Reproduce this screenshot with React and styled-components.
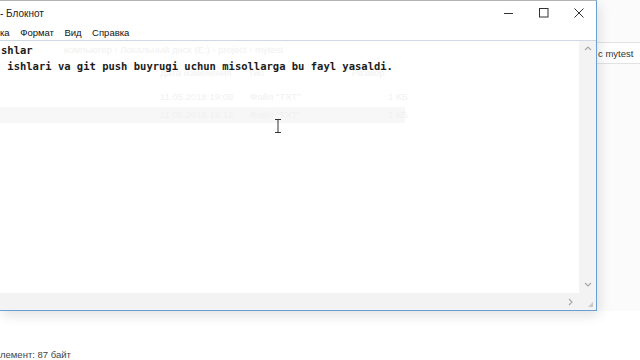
import React from "react";
import styled, { createGlobalStyle } from "styled-components";

const GlobalStyle = createGlobalStyle`
    html, body {
        margin: 0;
        padding: 0;
        background: #ffffff;
    }
    #root {
        width: 640px;
        height: 360px;
        overflow: hidden;
    }
`;

const Desktop = styled.div`
    width: 640px;
    height: 360px;
    display: flex;
    flex-direction: column;
    background: #ffffff;
    font-family: "Liberation Sans", Arial, sans-serif;
`;

const TopRow = styled.div`
    display: flex;
    height: 311px;
`;

const Window = styled.div`
    width: 596px;
    display: flex;
    flex-direction: column;
    border-top: 1px solid #b4b4b4;
    border-right: 1px solid #6a9fd6;
    border-bottom: 1px solid #6a9fd6;
    box-shadow: 2px 4px 12px rgba(0, 0, 0, 0.12);
    background: #ffffff;
    position: relative;
    z-index: 1;
`;

const TitleBar = styled.div`
    height: 23px;
    display: flex;
    align-items: center;
    justify-content: space-between;
`;

const Title = styled.div`
    font-size: 10px;
    color: #222;
    padding: 2px 0 0 0;
`;

const Controls = styled.div`
    display: flex;
    height: 100%;
`;

const ControlButton = styled.div`
    width: 35px;
    height: 100%;
    display: flex;
    align-items: center;
    justify-content: center;
`;

const MenuBar = styled.div`
    height: 16px;
    display: flex;
    align-items: center;
    gap: 10.5px;
    border-bottom: 1px solid #cfd9e6;
    font-size: 9.5px;
    color: #111;
`;

const MenuItem = styled.span`
    display: block;
`;

const Body = styled.div`
    flex: 1;
    display: flex;
`;

const EditArea = styled.div`
    flex: 1;
    position: relative;
    overflow: hidden;
`;

const Ghost = styled.div`
    position: absolute;
    inset: 0;
    font-size: 9.5px;
    color: #f1f1f1;
    pointer-events: none;
`;

const GhostText = styled.div`
    position: absolute;
    left: ${(p) => p.$x}px;
    top: ${(p) => p.$y}px;
    white-space: nowrap;
`;

const GhostRow = styled.div`
    position: absolute;
    left: 0;
    top: 66px;
    width: 405px;
    height: 16px;
    background: #f7f7f7;
`;

const TextContent = styled.pre`
    position: relative;
    display: inline-block;
    margin: 0;
    padding: 1px 0 0 1px;
    font-family: "DejaVu Sans Mono", "Liberation Mono", monospace;
    font-size: 10.5px;
    font-weight: 600;
    line-height: 16px;
    color: #1c1c1c;
`;

const Caret = styled.svg`
    position: absolute;
    left: 274px;
    top: 78px;
`;

const VScroll = styled.div`
    width: 17px;
    background: #f3f3f3;
    display: flex;
    flex-direction: column;
    justify-content: space-between;
    align-items: center;
    padding: 4px 0;
`;

const HScrollRow = styled.div`
    height: 17px;
    display: flex;
    background: #f3f3f3;
`;

const HTrack = styled.div`
    flex: 1;
    display: flex;
    align-items: center;
    justify-content: flex-end;
    padding-right: 4px;
`;

const Corner = styled.div`
    width: 17px;
    display: flex;
    align-items: flex-end;
    justify-content: flex-end;
    padding: 0 2px 2px 0;
    box-sizing: border-box;
`;

const Side = styled.div`
    flex: 1;
    display: flex;
    flex-direction: column;
    padding-top: 42px;
    background: #fbfbfb;
    overflow: hidden;
`;

const SearchBox = styled.div`
    height: 20px;
    border-top: 1px solid #e2e2e2;
    border-bottom: 1px solid #e2e2e2;
    display: flex;
    align-items: center;
    white-space: nowrap;
    font-size: 9.5px;
    color: #333;
    padding-left: 1px;
    background: #ffffff;
`;

const StatusLine = styled.div`
    margin-top: auto;
    height: 10px;
    margin-bottom: 0;
    font-size: 9.5px;
    line-height: 10px;
    color: #444;
`;

const Chevron = ({ dir }) => {
    const paths = {
        up: "M1 5 L4 2 L7 5",
        down: "M1 2 L4 5 L7 2",
        right: "M2 1 L5 4 L2 7",
    };
    return (
        <svg width="8" height="8" viewBox="0 0 8 8">
            <path d={paths[dir]} fill="none" stroke="#a8a8a8" strokeWidth="1.2" />
        </svg>
    );
};

const App = () => {
    return (
        <>
            <GlobalStyle />
            <Desktop>
                <TopRow>
                    <Window>
                        <TitleBar>
                            <Title>- Блокнот</Title>
                            <Controls>
                                <ControlButton>
                                    <svg width="10" height="10" viewBox="0 0 10 10">
                                        <path d="M0 5.5 H9" stroke="#333" strokeWidth="1" />
                                    </svg>
                                </ControlButton>
                                <ControlButton>
                                    <svg width="10" height="10" viewBox="0 0 10 10">
                                        <rect x="0.5" y="0.5" width="8.5" height="8.5" fill="none" stroke="#333" strokeWidth="1" />
                                    </svg>
                                </ControlButton>
                                <ControlButton>
                                    <svg width="10" height="10" viewBox="0 0 10 10">
                                        <path d="M0.5 0.5 L9.5 9.5 M9.5 0.5 L0.5 9.5" stroke="#333" strokeWidth="1" />
                                    </svg>
                                </ControlButton>
                            </Controls>
                        </TitleBar>
                        <MenuBar>
                            <MenuItem>ка</MenuItem>
                            <MenuItem>Формат</MenuItem>
                            <MenuItem>Вид</MenuItem>
                            <MenuItem>Справка</MenuItem>
                        </MenuBar>
                        <Body>
                            <EditArea>
                                <Ghost>
                                    <GhostText $x={64} $y={3}>
                                        компьютер  ›  Локальный диск (E:)  ›  project  ›  mytest
                                    </GhostText>
                                    <GhostText $x={160} $y={26}>Дата изменения</GhostText>
                                    <GhostText $x={248} $y={26}>Тип</GhostText>
                                    <GhostText $x={352} $y={26}>Размер</GhostText>
                                    <GhostText $x={160} $y={50}>11.05.2018 19:09</GhostText>
                                    <GhostText $x={250} $y={50}>Файл "TXT"</GhostText>
                                    <GhostText $x={388} $y={50}>1 КБ</GhostText>
                                    <GhostRow />
                                    <GhostText $x={160} $y={68}>11.05.2018 19:12</GhostText>
                                    <GhostText $x={250} $y={68}>Файл "TXT"</GhostText>
                                    <GhostText $x={388} $y={68}>1 КБ</GhostText>
                                </Ghost>
                                <TextContent>
                                    {"shlar\n ishlari va git push buyrugi uchun misollarga bu fayl yasaldi."}
                                </TextContent>
                                <Caret width="8" height="14" viewBox="0 0 8 14">
                                    <path d="M1 0.5 H7 M4 0.5 V13.5 M1 13.5 H7" stroke="#333" strokeWidth="1" fill="none" />
                                </Caret>
                            </EditArea>
                            <VScroll>
                                <Chevron dir="up" />
                                <Chevron dir="down" />
                            </VScroll>
                        </Body>
                        <HScrollRow>
                            <HTrack>
                                <Chevron dir="right" />
                            </HTrack>
                            <Corner>
                                <svg width="7" height="7" viewBox="0 0 7 7">
                                    <path d="M6 1 V6 H1 Z" fill="#c8c8c8" />
                                </svg>
                            </Corner>
                        </HScrollRow>
                    </Window>
                    <Side>
                        <SearchBox>с mytest</SearchBox>
                    </Side>
                </TopRow>
                <StatusLine>лемент: 87 байт</StatusLine>
            </Desktop>
        </>
    );
};

export default App;
